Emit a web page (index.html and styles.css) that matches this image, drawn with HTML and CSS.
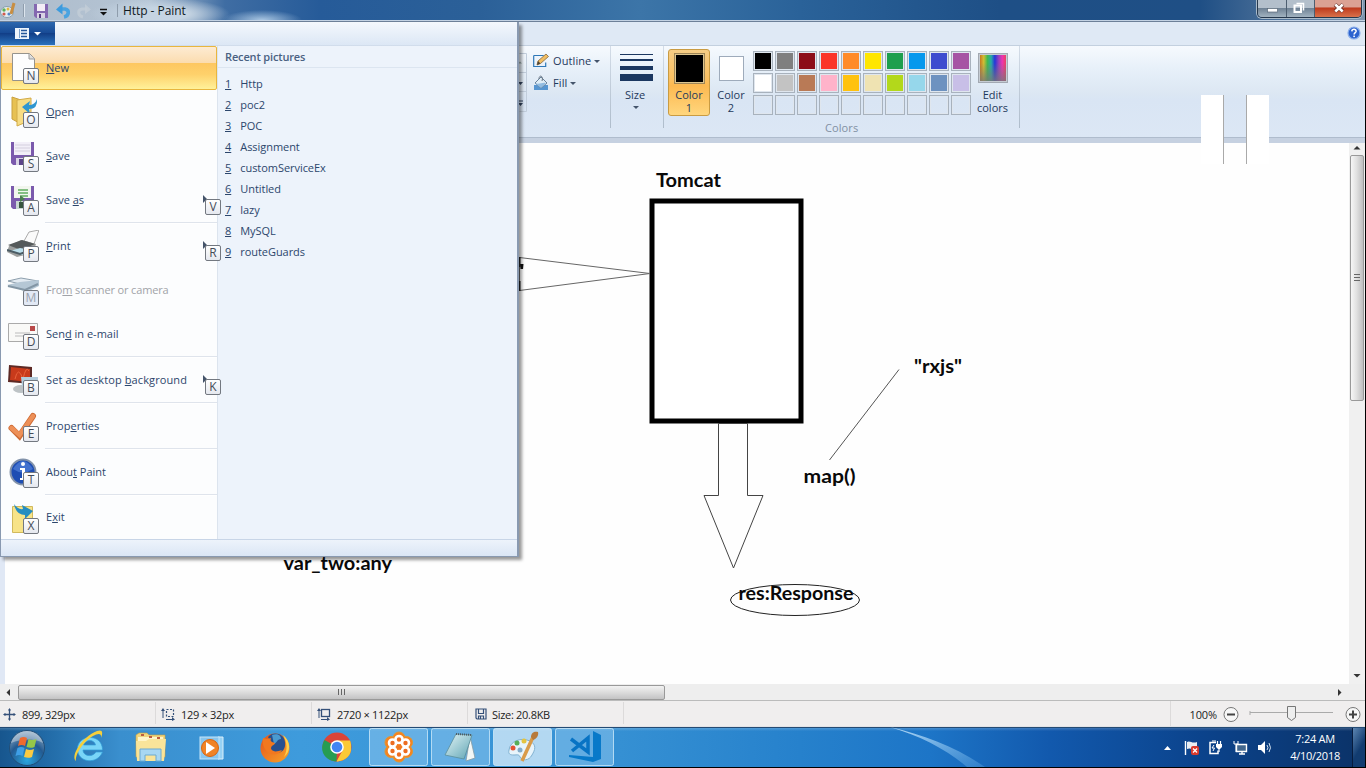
FILE: index.html
```html
<!DOCTYPE html>
<html lang="en">
<head>
<meta charset="utf-8">
<title>Http - Paint</title>
<link rel="stylesheet" href="styles.css">
</head>
<body>
<div class="screen">
  <header class="titlebar">
    <svg class="quick" width="122" height="21" viewBox="0 0 122 21">
      <ellipse cx="7" cy="12" rx="6.5" ry="5.5" fill="#e6eef2" stroke="#8aa0ae"/><circle cx="4" cy="10" r="1.7" fill="#5cae5b"/><circle cx="8" cy="9" r="1.5" fill="#e0b93c"/><circle cx="4" cy="14" r="1.6" fill="#d05a4c"/><circle cx="9" cy="14" r="1.6" fill="#4f86cc"/><path d="M11 14l3-11" stroke="#c88e42" stroke-width="3"/>
      <path d="M23.500 4v13M117.500 4v13" stroke="#8f9dac"/><path d="M24.500 4v13" stroke="#dce5ee"/>
      <path d="M34 4h14v14H36l-2-2z" fill="#8468b0"/><path d="M37 4h8v7h-8z" fill="#f3edf6"/><path d="M37 13h8v5h-8z" fill="#d9d3e4"/><path d="M39 14h2v4h-2z" fill="#563b82"/>
      <path d="M60 9h5c5 1 4 7-1 8" fill="none" stroke="#4aa3e0" stroke-width="3.600"/><path d="M56 9.500l6.500-6v11z" fill="#3c9bde"/>
      <path d="M87 9h-5c-5 1-4 7 1 8" fill="none" stroke="#c3cdd7" stroke-width="3" opacity=".8"/><path d="M91 9.500l-6-5.500v10z" fill="#c3cdd7" opacity=".8"/>
      <path d="M100 9.500h7" stroke="#111" stroke-width="1.500"/><path d="M100 12h7l-3.500 3.500z" fill="#111"/>
    </svg>
    <span class="title-text">Http - Paint</span>
    <div class="win-buttons">
      <i class="wb wb-min"><svg width="28" height="17"><rect x="9.500" y="8.500" width="10" height="3.500" fill="#fff" stroke="#596978" stroke-width=".7"/></svg></i>
      <i class="wb wb-max"><svg width="27" height="17"><path d="M9.500 3.500h7v7" fill="none" stroke="#fff" stroke-width="1.500"/><rect x="7.500" y="5.500" width="6.500" height="6.500" fill="none" stroke="#fff" stroke-width="2"/></svg></i>
      <i class="wb wb-close"><svg width="46" height="17"><path d="M20 4.500l8 7M28 4.500l-8 7" stroke="#6b2f27" stroke-width="4"/><path d="M20.300 4.500l7.400 7M27.700 4.500l-7.400 7" stroke="#fff" stroke-width="2.600"/></svg></i>
    </div>
  </header>

  <div class="tabrow">
    <div class="appbtn"><svg width="55" height="23"><rect x="15" y="6" width="14" height="11" fill="#eef5fc"/><path d="M21 8.500h6M21 11.500h6M21 14.500h6" stroke="#24579a" stroke-width="1.300"/><path d="M19.500 7v9" stroke="#7ea3cd"/><path d="M34 10h7l-3.500 3.500z" fill="#fff"/></svg></div>
    <svg class="help" width="14" height="14" viewBox="0 0 14 14"><circle cx="7" cy="7" r="6" fill="#2c63cf" stroke="#8db0ea" stroke-width="1.200"/><path d="M4.800 5.400c.2-3 4.600-2.600 4.300 0-.2 1.200-2 1.300-2 3" fill="none" stroke="#fff" stroke-width="1.500"/><rect x="6.300" y="9.600" width="1.600" height="1.500" fill="#fff"/></svg>
  </div>

  <div class="ribbon">
    <div class="gallery"><svg width="10" height="59"><path d="M1.500 .5h7v58h-7M1 19.500h7M1 38.500h7" fill="none" stroke="#c1cddb"/><path d="M0 10.500h4l-2-2z" fill="#9aa"/><path d="M0 29h5l-2.500 3zM0 50h5l-2.500 3zM0 47.500h5v1H0z" fill="#334560"/></svg></div>
    <div class="shape-opts">
      <div class="opt"><svg width="17" height="16" viewBox="0 0 17 16"><path d="M.7 2.500h10M.7 2.500v11h12v-4" fill="none" stroke="#2e78b8" stroke-width="1.200"/><path d="M4 12l1-4 8-7 2.500 2.500-8 7z" fill="#f0bd62" stroke="#87673a" stroke-width=".8"/><path d="M4 12l1-4 2.500 2.500z" fill="#4d4438"/></svg><span>Outline</span><i class="caret"></i></div>
      <div class="opt"><svg width="17" height="16" viewBox="0 0 17 16"><path d="M1 10h14v5H1z" fill="#5796d1"/><path d="M2 8l6-6 6 6-6 5z" fill="#e0edf6" stroke="#6a839b"/><path d="M2 8c4 2 7-1 11 0l-5 5z" fill="#91bce1"/><path d="M6 4c0-5 5-3 3 2" fill="none" stroke="#6a7785"/></svg><span>Fill</span><i class="caret"></i></div>
    </div>
    <div class="size-group">
      <svg width="33" height="29"><path d="M0 1.500h33" stroke="#1b3760"/><path d="M0 7h33" stroke="#1b3760" stroke-width="2"/><path d="M0 15h33" stroke="#1b3760" stroke-width="4"/><path d="M0 24.500h33" stroke="#1b3760" stroke-width="7"/></svg>
      <span>Size</span><i class="caret"></i>
    </div>
    <div class="color-btn active"><b class="black"></b><span>Color<br>1</span></div>
    <div class="color-btn second"><b class="white"></b><span>Color<br>2</span></div>
    <div class="palette-wrap">
      <div class="palette">
        <i class="k1"></i><i class="k2"></i><i class="k3"></i><i class="k4"></i><i class="k5"></i><i class="k6"></i><i class="k7"></i><i class="k8"></i><i class="k9"></i><i class="k10"></i>
        <i class="k11"></i><i class="k12"></i><i class="k13"></i><i class="k14"></i><i class="k15"></i><i class="k16"></i><i class="k17"></i><i class="k18"></i><i class="k19"></i><i class="k20"></i>
        <i></i><i></i><i></i><i></i><i></i><i></i><i></i><i></i><i></i><i></i>
      </div>
    </div>
    <div class="edit-colors"><b></b><span>Edit<br>colors</span></div>
    <span class="group-label">Colors</span>
  </div>
  <div class="ribbon-edge"></div>

  <main class="work">
    <svg class="canvas" width="1349" height="541" viewBox="0 143 1349 541">
      <rect x="0" y="142" width="5" height="542" fill="#e0e8f5"/>
      <rect x="652" y="201" width="149" height="220" fill="#fff" stroke="#000" stroke-width="5"/>
      <path d="M519.500 257.500L650 273.500L519.500 290.500z" fill="none" stroke="#666"/>
      <path d="M519.500 257v10M519.500 281v10" stroke="#222" stroke-width="2"/>
      <path d="M520 264h3.500l-.5 5h-2.500z" fill="#111"/>
      <path d="M718.500 423.500h29v72h15.500l-29.500 72.500l-29.500-72.500h14.500z" fill="none" stroke="#444"/>
      <path d="M899 369.500L829.500 460" stroke="#555"/>
      <ellipse cx="795" cy="600" rx="64.500" ry="15.500" fill="none" stroke="#222"/>
      <text class="ink" x="656" y="187" textLength="65" lengthAdjust="spacingAndGlyphs">Tomcat</text>
      <text class="ink" x="914" y="373" textLength="48" lengthAdjust="spacingAndGlyphs">"rxjs"</text>
      <text class="ink" x="803.500" y="483" textLength="52" lengthAdjust="spacingAndGlyphs">map()</text>
      <text class="ink" x="738.500" y="600" textLength="115" lengthAdjust="spacingAndGlyphs">res:Response</text>
      <text class="ink" x="283.500" y="570" textLength="108.500" lengthAdjust="spacingAndGlyphs">var_two:any</text>
    </svg>
    <div class="vscroll">
      <svg width="16" height="12"><path d="M4.500 6.500h7l-3.500-3.500z" fill="#333"/></svg>
      <div class="vthumb"><i></i></div>
      <svg class="down" width="16" height="16"><path d="M4.500 6h7l-3.500 3.500z" fill="#333"/></svg>
    </div>
  </main>

  <div class="hscroll">
    <svg width="18" height="16"><path d="M10 5v7L6.500 8.500z" fill="#333"/></svg>
    <div class="hthumb"><i></i></div>
    <svg class="right" width="16" height="16"><path d="M6 5v7l3.500-3.500z" fill="#333"/></svg>
  </div>

  <footer class="status">
    <div class="cell c1"><svg width="13" height="13"><path d="M6.500 1v11M1 6.500h11" stroke="#355079" stroke-width="1.300"/><path d="M5 2.500l1.500-2.500 1.500 2.500zM5 10.500l1.500 2.500 1.500-2.500zM2.500 5l-2.500 1.500 2.500 1.500zM10.500 5l2.500 1.500-2.500 1.500z" fill="#355079"/></svg><span>899, 329px</span></div>
    <div class="cell c2"><svg width="14" height="13"><path d="M2 2v8M5 11.500h7" stroke="#355079"/><path d="M0 3l2-3 2 3zM11 9l3 2.500-3 1.500z" fill="#355079"/><rect x="5.500" y="1.500" width="7" height="7" fill="none" stroke="#355079" stroke-width="1.200" stroke-dasharray="2 1.500"/></svg><span>129 × 32px</span></div>
    <div class="cell c3"><svg width="14" height="13"><path d="M2 2v8M4 11.500h7" stroke="#355079"/><path d="M0 3l2-3 2 3zM10 9l3 2.500-3 1.500z" fill="#355079"/><rect x="4.500" y="1.500" width="8" height="7" fill="none" stroke="#355079" stroke-width="1.300"/></svg><span>2720 × 1122px</span></div>
    <div class="cell c4"><svg width="12" height="12"><path d="M1 1h10v10H2l-1-1zM3.500 1v4.500h5V1M3.500 11V8h5v3M5.500 8v3" fill="none" stroke="#355079" stroke-width="1.200"/></svg><span>Size: 20.8KB</span></div>
    <div class="zoomctl">
      <span>100%</span>
      <svg width="142" height="22"><g fill="#f7f7f7" stroke="#777"><circle cx="12" cy="11.500" r="7"/><circle cx="134" cy="11.500" r="7"/></g><path d="M8 11.500h8M130 11.500h8M134 7.500v8" stroke="#444" stroke-width="2"/><path d="M31 9.500h83" stroke="#aaa"/><path d="M31 8v4" stroke="#aaa"/><path d="M68.500 3.500h8v11l-4 3-4-3z" fill="#eee" stroke="#777"/></svg>
    </div>
  </footer>

  <nav class="taskbar">
    <svg class="tb-art" width="1366" height="40" viewBox="0 727 1366 40">
      <defs>
        <radialGradient id="orb" cx=".5" cy=".85" r=".9"><stop offset="0" stop-color="#2aa6e0"/><stop offset=".55" stop-color="#235a91"/><stop offset="1" stop-color="#9fb6c9"/></radialGradient>
        <linearGradient id="streak" x1="0" y1="0" x2="1" y2="1"><stop offset="0" stop-color="#d7efff" stop-opacity=".85"/><stop offset="1" stop-color="#6bb4ec" stop-opacity=".3"/></linearGradient>
        <linearGradient id="note" x1="0" y1="0" x2="1" y2="1"><stop offset="0" stop-color="#e4f5f6"/><stop offset="1" stop-color="#5ea4b4"/></linearGradient>
        <linearGradient id="ff" x1="0" y1="0" x2="1" y2="1"><stop offset="0" stop-color="#e5521a"/><stop offset="1" stop-color="#f7a32a"/></linearGradient>
      </defs>
      <path d="M890 727c34 8 66 20 95 40h-18c-20-17-46-31-77-40z" fill="url(#streak)"/>
      <circle cx="27" cy="748" r="17.500" fill="url(#orb)" stroke="#214e77"/>
      <path d="M11 743c5-16 27-16 32 0-10-5-22-4-32 0z" fill="#fff" opacity=".35"/>
      <path d="M20 738c3-1.500 5-1 7 0l-2 8c-2-1-4-1.500-7 0z" fill="#ee6a2f"/><path d="M28.500 739c3 1.500 5 1.200 8 0l-2 8c-3 1.200-5 1-8 0z" fill="#95c749"/><path d="M17.500 748c3-1.500 5-1 7 0l-2 8c-2-1-4-1.500-7 0z" fill="#3f9fe6"/><path d="M26 749c3 1.500 5 1.200 8 0l-2 8c-3 1.200-5 1-8 0z" fill="#fbcb42"/>
      <path d="M102.500 750H83c0 6 9 8 13 2h6.500c-5 13-25 11-25-3 0-15 25-16 25 1zM83.500 745h12c-1-6-10-6-12 0z" fill="#79d5f8" stroke="#319dd8" stroke-width=".7"/><path d="M76 761c-6-5 6-24 21-30 6-2 6 2 4 7 1-5-3-5-8-2-9 5-18 18-17 25z" fill="#f5cf3b"/>
      <path d="M136 735l3-2h8l2 2h16v22h-29z" fill="#efd57e" stroke="#c99e3d" stroke-width=".6"/><path d="M138 737h25v7h-25z" fill="#fff5c9"/><path d="M141 735h3M149 737h3M157 738h3" stroke="#bd5d40" stroke-width="2"/><path d="M136 741h10l3-2h17l-2 22h-27z" fill="#f9e49a"/><path d="M140 749h21v12h-5v-6h-11v6h-5z" fill="#a8d7f2" stroke="#6daad1"/>
      <path d="M218 737h5v22h-5z" fill="#96d1f4" stroke="#d9effa"/><rect x="200" y="737" width="19" height="22" fill="#88c6ef" stroke="#c5e6fa"/><circle cx="210" cy="748" r="8.500" fill="#f08326" stroke="#d9650f"/><path d="M206 742v12l9-6z" fill="#fff"/>
      <circle cx="275" cy="748" r="14.500" fill="url(#ff)"/><path d="M268 737c5-6 16-4 17 5 1 7-3 11-8 11-6 0-7-4-5-8z" fill="#27508f"/><path d="M272 735c5-2 9 0 9 4-4 0-4 4-7 5z" fill="#4a9ad0"/><path d="M263 738l4 1 4-1c-1 3 0 4 4 5-1 3-5 2-4 6 3 4 7 2 11 1-3 6-13 6-17-1-2-3-3-7-2-11z" fill="#f2781f"/><path d="M283 735c8 6 8 17 1 22 4-7 3-15-1-22z" fill="#ffd14a"/>
      <g><circle cx="337" cy="747" r="14.500" fill="#db4437"/><path d="M337 747l-12.500-7c-6 10 0 21 12 21.500z" fill="#269c52"/><path d="M337 747h14c1 8-5 14-14.500 14.500l6-11z" fill="#fbc935"/><path d="M337 740.500h13c3 7 0 19-13 21l6-11z" fill="#fbc935"/><circle cx="337" cy="747" r="6.800" fill="#fff"/><circle cx="337" cy="747" r="5.300" fill="#4285f4"/></g>
      <g class="task-frames"><rect x="369.500" y="728.500" width="58" height="37" rx="2"/><rect x="431.500" y="728.500" width="58" height="37" rx="2"/><rect class="lit" x="493.500" y="728.500" width="58" height="37" rx="2"/><rect x="555.500" y="728.500" width="58" height="37" rx="2"/></g>
      <g fill="#f58220" stroke="#e5962d"><circle cx="399" cy="738" r="6"/><circle cx="406.500" cy="742.500" r="6"/><circle cx="406.500" cy="751.500" r="6"/><circle cx="399" cy="756" r="6"/><circle cx="391" cy="751.500" r="6"/><circle cx="391" cy="742.500" r="6"/><circle cx="399" cy="747" r="9" stroke="none"/></g>
      <g fill="#ec6c20" stroke="#fff" stroke-width="2.600"><circle cx="399" cy="739.500" r="3.500"/><circle cx="405.500" cy="743" r="3.500"/><circle cx="405.500" cy="751" r="3.500"/><circle cx="399" cy="754.500" r="3.500"/><circle cx="392.500" cy="751" r="3.500"/><circle cx="392.500" cy="743" r="3.500"/><circle cx="399" cy="747" r="2.500" fill="#f07822" stroke="none"/></g>
      <path d="M470 736l5 22-9 3z" fill="#f3f7f6" stroke="#849ba3" stroke-width=".8"/><path d="M456 734l16 1-8 24-19-4z" fill="url(#note)" stroke="#5b8e9b" stroke-width=".8"/><path d="M456 734l16 1" stroke="#4e5c65" stroke-width="2" stroke-dasharray="1 1"/>
      <path d="M509 750c1-9 12-13 21-9 7 4 5 9 2 14-3 6-10 6-12 2-1-3-3-2-6-2-4 0-6-1-5-5z" fill="#e7f4fb" stroke="#81b2d1"/><circle cx="513" cy="748" r="2.500" fill="#e35235"/><circle cx="517" cy="743" r="2.500" fill="#57ae59"/><circle cx="524" cy="741" r="2.500" fill="#e4c441"/><circle cx="520" cy="750" r="2.500" fill="#83abc9"/><path d="M522 761l11-24" stroke="#d99b4a" stroke-width="3.500"/><path d="M531 737c0-5 4-6 7-5 1 4-2 7-5 8z" fill="#b77a3b"/>
      <path d="M593 731l8 4v24l-8 3-24-5v-2l24 2z" fill="#0879c9"/><path d="M571 739l17 13V738l-16 13" fill="none" stroke="#0873c4" stroke-width="3.500"/>
      <path d="M1164 750h7l-3.500-4z" fill="#fff"/>
      <path d="M1185.500 741v14" stroke="#fff" stroke-width="1.400"/><path d="M1187 742c3-2 5 2 10 0v7c-4 2-6-2-10 0z" fill="#e9eef3"/><rect x="1191" y="746" width="8" height="9" rx="2" fill="#d93a2d"/><path d="M1193 748.500l4 4M1197 748.500l-4 4" stroke="#fff" stroke-width="1.300"/>
      <path d="M1216 742.500h-6v11h8v-3" fill="none" stroke="#fff" stroke-width="1.500"/><path d="M1212 741h4M1214 745l-2 3h2.500l-1.500 3" fill="none" stroke="#fff"/><path d="M1216 744h6v3l-2 2h-2l-2-2z" fill="#fff"/><path d="M1217.500 741v4M1220.500 741v4M1219 748v4" stroke="#fff" stroke-width="1.200"/>
      <path d="M1236.500 744.500h10v7h-10zM1239 754h6M1242 751v3" fill="#42678e" stroke="#fff" stroke-width="1.400"/><path d="M1234 741v3h4v-3M1236 744v8" fill="none" stroke="#fff"/>
      <path d="M1258 745h3l4-4v13l-4-4h-3z" fill="#fff"/><path d="M1267 745q2 3 0 5M1269 743q3 5 0 9" fill="none" stroke="#d4e2ef"/>
    </svg>
    <div class="clock">7:24 AM<br>4/10/2018</div><div class="show-desktop"></div>
  </nav>

  <section class="filemenu">
    <div class="commands">
      <div class="cmd hot"><svg class="ico" width="32" height="32"><path d="M5.500 1.500h17l5 5v22h-22z" fill="#fdfdfd" stroke="#96938c"/><path d="M22 2v5h6" fill="#ddd" stroke="#999"/></svg><kbd>N</kbd><span><u>N</u>ew</span></div>
      <div class="cmd"><svg class="ico" width="32" height="32"><path d="M5 1l9 3v24l-9-5z" fill="#e7c152" stroke="#c9a040"/><path d="M10 4l14-2v22l-14 6z" fill="#f7dc83" stroke="#d2ab48"/><path d="M15 11l8-6-1 4q6 0 8-6 1 10-8 10l1 5z" fill="#2f96d0"/></svg><kbd>O</kbd><span><u>O</u>pen</span></div>
      <div class="cmd"><svg class="ico" width="32" height="32"><path d="M4 2h23v23H6l-2-2z" fill="#7b5aad"/><path d="M7 2h17v13H7z" fill="#f2eff8"/><path d="M8 5h15M8 8h15M8 11h15" stroke="#d4cfde"/><path d="M9 18h13v7H9z" fill="#d9d5e5"/><path d="M12 19h4v6h-4z" fill="#5b4489"/></svg><kbd>S</kbd><span><u>S</u>ave</span></div>
      <div class="cmd"><svg class="ico" width="32" height="32"><path d="M4 2h23v23H6l-2-2z" fill="#7b5aad"/><path d="M7 2h17v12H7z" fill="#f2f6ee"/><path d="M11 6h10M11 9h10M14 12h7" stroke="#62ad60" stroke-width="1.500"/><path d="M9 17h13v8H9z" fill="#c9d7d3"/><path d="M12 18h4v6h-4z" fill="#38553f"/><path d="M13 11l5 4-5 3z" fill="#4b7d4f"/></svg><kbd>A</kbd><span>Save <u>a</u>s</span><i class="arrow"></i><kbd class="sub">V</kbd></div>
      <hr>
      <div class="cmd"><svg class="ico" width="32" height="32"><path d="M17 11l5-9 10-2-5 14z" fill="#fafafa" stroke="#aaa"/><path d="M2 16l12-6 15 4-3 9-16 4-10-5z" fill="#9d9f9e"/><path d="M1 15l14-5 13 4-14 6z" fill="#555a5b"/><path d="M3 21l10-3 12 2-10 5z" fill="#bce0ed"/><path d="M0 20l13 4 14-5" fill="none" stroke="#4b5c65" stroke-width="2"/></svg><kbd>P</kbd><span><u>P</u>rint</span><i class="arrow"></i><kbd class="sub">R</kbd></div>
      <div class="cmd off"><svg class="ico" width="32" height="32"><path d="M1 7l13-3 17 3-10 5z" fill="#e3ebf2" stroke="#8c9eac"/><path d="M0 11l13-3 19-2v6l-12 6z" fill="#b5c7d5"/><path d="M1 12l17 4 13-6" fill="none" stroke="#8396a5" stroke-width="2"/></svg><kbd>M</kbd><span>Fro<u>m</u> scanner or camera</span></div>
      <div class="cmd"><svg class="ico" width="32" height="32"><path d="M1.500 5.500h29v18h-29z" fill="#f9f9f7" stroke="#aaa"/><rect x="23" y="8" width="5" height="5" fill="#b94a4a"/><path d="M8 15h15M8 18h15" stroke="#bbb"/></svg><kbd>D</kbd><span>Sen<u>d</u> in e-mail</span></div>
      <hr>
      <div class="cmd"><svg class="ico" width="32" height="32"><path d="M2 1l23 2v17L1 18z" fill="#5d2a25"/><path d="M4 3l19 2v13L3 16z" fill="#c83a1b"/><path d="M8 15q3-14 8 0 3-14 6-8" fill="none" stroke="#e9633c"/><ellipse cx="14" cy="25" rx="8" ry="4" fill="#bdc3c6"/><path d="M14 13h17v9H15z" fill="#b2cddd"/></svg><kbd>B</kbd><span class="wide">Set as desktop <u>b</u>ackground</span><i class="arrow"></i><kbd class="sub">K</kbd></div>
      <hr>
      <div class="cmd"><svg class="ico" width="32" height="32"><path d="M4.500 18l8 8L26 6" fill="none" stroke="#ce6b34" stroke-width="6" stroke-linecap="round"/><path d="M4.500 18l8 7L26 6" fill="none" stroke="#ed9058" stroke-width="4.400" stroke-linecap="round"/></svg><kbd>E</kbd><span>Prop<u>e</u>rties</span></div>
      <hr>
      <div class="cmd"><svg class="ico" width="32" height="32"><circle cx="16" cy="16" r="12.500" fill="#1d4db3" stroke="#8292aa" stroke-width="2"/><path d="M6 13q10-16 20 0-10 7-20 0z" fill="#5b8adf" opacity=".6"/><circle cx="16" cy="8" r="2" fill="#fff"/><path d="M13 12h5v10h3v2h-8v-2h2v-8h-2z" fill="#fff"/></svg><kbd>T</kbd><span>Abou<u>t</u> Paint</span></div>
      <hr>
      <div class="cmd last"><svg class="ico" width="32" height="32"><path d="M5.500 4.500h20v26h-20z" fill="#f7e388" stroke="#d1b95c"/><path d="M7 2q4 6 9 5l-1-4 11 6-8 8v-4Q9 13 7 2z" fill="#268dc0"/></svg><kbd>X</kbd><span>E<u>x</u>it</span></div>
    </div>
    <div class="recent">
      <h2>Recent pictures</h2>
      <ol>
        <li><u>1</u>Http</li><li><u>2</u>poc2</li><li><u>3</u>POC</li><li><u>4</u>Assignment</li><li><u>5</u>customServiceEx</li><li><u>6</u>Untitled</li><li><u>7</u>lazy</li><li><u>8</u>MySQL</li><li><u>9</u>routeGuards</li>
      </ol>
    </div>
    <div class="menu-foot"></div>
  </section>

  <div class="pause"><i></i><b></b><i></i></div>
</div>
</body>
</html>
```
FILE: styles.css
```css
* { box-sizing: border-box; }
body { margin: 0; background: #000; }
.screen { position: relative; width: 1366px; height: 768px; overflow: hidden; display: flex; flex-direction: column; background: #000; font: 11px/13px "Open Sans", "Noto Sans", sans-serif; color: #1e395b; }
i, b { display: block; font-style: normal; }
svg { display: block; flex: none; }

.titlebar { height: 22px; width: 1365px; display: flex; align-items: flex-start; border-bottom: 1px solid #6d8098; box-shadow: inset 0 -1px #c3d2e3;
  background: radial-gradient(ellipse 70px 16px at 160px 14px, #c5d4e2 40%, transparent), radial-gradient(ellipse 40px 10px at 262px 20px, #a9c6e2, transparent), linear-gradient(90deg, #aebccb 0, #b4c4d4 150px, #3f6da3 225px, #265b99 320px, #2b6098 480px, #3c75a8 640px, #2a6299 800px, #1e4f86 1000px, #1f4f85 1200px, #7e95ae 1365px); }
.title-text { font: 12px/22px "Open Sans", sans-serif; color: #101820; letter-spacing: -.05px; margin-left: 1px; }
.win-buttons { margin-left: auto; margin-right: 3px; display: flex; height: 18px; border: 1px solid #26384d; border-top: 0; border-radius: 0 0 5px 5px; box-shadow: 0 0 0 1px #a9bac9; overflow: hidden; }
.wb { height: 17px; background: linear-gradient(#b3bfcb 0 45%, #6c7f92 46%, #a1b2c0); border-right: 1px solid #4d5e70; }
.wb-close { background: linear-gradient(#dba193 0 42%, #bd391c 46%, #d9714b); border: 0; }

.tabrow { height: 23px; width: 1365px; display: flex; justify-content: space-between; background: #dfe9f5; }
.appbtn { width: 55px; height: 23px; background: linear-gradient(#2c67ae, #174a95 48%, #123f88 50%, #2a72bd); }
.help { margin: 4px 4px 0 0; }

.ribbon { position: relative; height: 92px; width: 1365px; padding-left: 518px; display: flex; align-items: flex-start; border-top: 1px solid #c3d0df; background: linear-gradient(#f6fafe, #e7f0f9 25%, #dce7f3 52%, #d9e5f4 60%, #dce7f5); }
.ribbon-edge { height: 6px; width: 1365px; background: #c6d1e1; border-top: 1px solid #afbccd; flex: none; }
.gallery { width: 15px; margin-top: 7px; }
.shape-opts { width: 78px; padding-top: 7px; display: flex; flex-direction: column; gap: 6px; height: 82px; border-image: linear-gradient(#d4dde8, #aebccb) 1; border-width: 0 1px 0 0; border-style: solid; }
.opt { display: flex; align-items: center; height: 16px; gap: 3px; white-space: nowrap; letter-spacing: .1px; }
.opt span { margin-top: -1px; }
.caret { border: 3px solid transparent; border-top-color: #44546b; border-bottom: 0; width: 6px; height: 3px; }
.size-group { width: 53px; height: 82px; padding: 7px 0 0 9px; border-style: solid; border-width: 0 1px 0 0; border-image: linear-gradient(#d4dde8, #aebccb) 1; }
.size-group span { display: block; margin: 6px 0 3px 5px; }
.size-group .caret { margin-left: 13px; margin-top: 5px; }
.color-btn { width: 42px; height: 67px; margin: 3px 0 0 4px; padding-top: 3px; text-align: center; border: 1px solid transparent; }
.active { border-color: #c99b42; border-radius: 3px; background: linear-gradient(#f6ce86, #fbc060 45%, #fcb951 55%, #ffd67d); }
.second { margin-left: 0; }
.color-btn b { width: 31px; height: 31px; margin: 0 auto 4px; border: 1px solid #9e8556; box-shadow: inset 0 0 0 1px #ddc690; }
.color-btn .black { background: #000; }
.color-btn .white { width: 25px; height: 25px; margin: 3px auto 7px; background: #fff; border-color: #9eabbb; box-shadow: none; }
.palette-wrap { padding: 5px 0 0 1px; }
.palette { display: grid; grid-template-columns: repeat(10, 20px); gap: 2px; }
.palette i { height: 20px; border: 1px solid #a8b2bd; padding: 0; box-shadow: inset 0 0 0 1px #dfe6ee; }
.k1{background:#000}.k2{background:#7f7f7f}.k3{background:#8c0d18}.k4{background:#fb3528}.k5{background:#ff8b28}.k6{background:#ffe600}.k7{background:#1e9f4e}.k8{background:#0698ed}.k9{background:#3e4ccf}.k10{background:#a654a4}
.k11{background:#fff}.k12{background:#c3c3c3}.k13{background:#b97a56}.k14{background:#ffb3ca}.k15{background:#ffc20e}.k16{background:#efe3b2}.k17{background:#b3d81b}.k18{background:#96d7eb}.k19{background:#6d92c0}.k20{background:#c8bfe7}
.edit-colors { width: 49px; height: 82px; padding: 7px 5px 0 0; text-align: center; border-style: solid; border-width: 0 1px 0 0; border-image: linear-gradient(#d4dde8, #aebccb) 1; }
.edit-colors b { width: 30px; height: 30px; margin: 0 auto 5px; border: 2px solid #c6ccd3; outline: 1px solid #a2a9b2; outline-offset: -1px; background: linear-gradient(transparent 30%, #777c), linear-gradient(90deg, #c77820, #d1be34, #40b850, #28aaa8, #2535da, #9240bd, #ed35b0, #ea4162); }
.group-label { position: absolute; left: 825px; top: 75px; color: #8290a3; letter-spacing: .1px; }

.work { height: 541px; width: 1365px; display: flex; background: #fefefe; flex: none; overflow: hidden; }
.ink { font: 700 18.500px Lato, "Open Sans", sans-serif; fill: #090909; }
.vscroll { width: 16px; background: #f0f0f0; display: flex; flex-direction: column; }
.vthumb { width: 14px; height: 246px; margin-left: 1px; border: 1px solid #999; border-radius: 2px; background: linear-gradient(90deg, #f6f6f6, #e1e1e1 45%, #bfbfc0); display: grid; place-items: center; }
.vthumb i { width: 6px; height: 8px; background: repeating-linear-gradient(#666 0 1px, transparent 1px 3px); }
.down { margin-top: auto; }
.hscroll { height: 17px; width: 1365px; display: flex; align-items: center; background: #eee; flex: none; border-bottom: 1px solid #bbb; }
.hthumb { width: 647px; height: 15px; border: 1px solid #999; border-radius: 2px; background: linear-gradient(#f2f2f2, #dedede 45%, #c3c3c4); display: grid; place-items: center; }
.hthumb i { width: 8px; height: 6px; background: repeating-linear-gradient(90deg, #666 0 1px, transparent 1px 3px); }
.right { margin-left: auto; margin-right: 17px; }

.status { height: 26px; width: 1365px; display: flex; background: #f0eeee; flex: none; color: #222; border-bottom: 1px solid #e3e3e6; }
.cell { display: flex; align-items: center; width: 156px; gap: 6px; padding: 2px 0 0 5px; margin: 1px 0 2px; border-right: 1px solid #dcdada; letter-spacing: -.3px; }
.c1 { padding-left: 3px; }
.c4 { padding-left: 7px; gap: 5px; }
.zoomctl { margin-left: auto; display: flex; align-items: center; padding: 1px 4px 0 18px; border-left: 1px solid #dcdada; letter-spacing: -.1px; gap: 2px; }

.taskbar { position: relative; height: 40px; width: 1365px; flex: none; display: flex; justify-content: flex-end; border-top: 1px solid #244b74;
  background: linear-gradient(#ffffff30, transparent 8%), linear-gradient(90deg, #17568e, #216aa6 45px, #3a8fce 120px, #3e9bdc 300px, #3590d3 620px, #2681cc 800px, #1d75c7 930px, #1259ad 1050px, #0b438c 1200px, #0b3267 1365px); }
.tb-art { position: absolute; left: 0; top: -1px; }
.task-frames rect { fill: #8fc8ef; fill-opacity: .5; stroke: #d4edfb; stroke-opacity: .75; }
.task-frames .lit { fill: #e3f3fc; fill-opacity: .72; }
.clock { color: #fff; text-align: center; font-size: 11px; line-height: 17px; letter-spacing: -.25px; margin: 2px 12px 0 0; }
.show-desktop { width: 13px; height: 39px; border-left: 1px solid #071c3d; background: linear-gradient(120deg, #5d86b2, #123c70 55%); }

.filemenu { position: absolute; left: 0; top: 22px; width: 519px; height: 535px; padding-top: 24px; display: grid; grid-template: 493px 17px / 217px 1fr; border: solid #8999b0; border-width: 0 2px 1px 1px; box-shadow: 3px 3px 3px #0006; background: linear-gradient(#f4f8fd, #dce7f5 23px, #b8c8dd 23px, #eaf1fa 24px); color: #2c466c; clip-path: polygon(55px 0, 530px 0, 530px 550px, 0 550px, 0 23px, 55px 23px); }
.commands { background: #fcfdfe; border-right: 1px solid #dce4ee; display: flex; flex-direction: column; padding: 0; }
.cmd { position: relative; height: 44px; flex: none; display: flex; align-items: center; padding-left: 6px; }
.cmd span { margin: -2px 0 0 7px; white-space: nowrap; }
.cmd .wide { letter-spacing: .1px; }
.hot { border: 1px solid #e8b63e; border-radius: 2px; padding-left: 5px; background: linear-gradient(#fdebd2, #fbdcaf 38%, #fdc761 39%, #fed16b 65%, #fff19a); }
.last { height: 43px; }
.commands hr { width: 172px; height: 2px; margin: 0 0 0 auto; border: 0; background: #dfe4ec; border-bottom: 1px solid #fff; flex: none; }
kbd { position: absolute; left: 22px; top: 22px; width: 16px; height: 16px; border: 1px solid #737880; border-radius: 2px; background: linear-gradient(#fff, #e5e8ef); color: #444b57; font: 12px/14px "Open Sans", sans-serif; text-align: center; }
.hot kbd { left: 21px; top: 21px; }
kbd.sub { left: 204px; z-index: 2; top: 21px; }
.arrow { position: absolute; left: 202px; top: 17px; border: 4px solid transparent; border-left-color: #45546a; border-right: 0; }
.off { color: #a1a3a8; }
.off span { letter-spacing: -.15px; }
.off kbd { color: #9aa1ac; background: #e2e9f5; }
.recent { background: #edf3fb; }
.recent h2 { margin: 0; height: 22px; font: 600 11px/22px "Open Sans", sans-serif; letter-spacing: -.15px; color: #4a6182; padding-left: 7px; border-bottom: 1px solid #dce5f0; }
.recent ol { list-style: none; margin: 5px 0 0; padding: 0 0 0 7px; }
.recent li { height: 21px; line-height: 22px; display: flex; gap: 9px; letter-spacing: -.05px; }
.menu-foot { grid-column: 1 / 3; border-top: 1px solid #c8d5e7; background: linear-gradient(#edf3fb, #dbe6f5); }

.pause { position: absolute; left: 1201px; top: 95px; display: flex; width: 68px; height: 69px; }
.pause i { width: 22px; background: #fff; }
.pause b { width: 24px; border: solid #a9a9a9; border-width: 0 1px; height: 69px; }
```
